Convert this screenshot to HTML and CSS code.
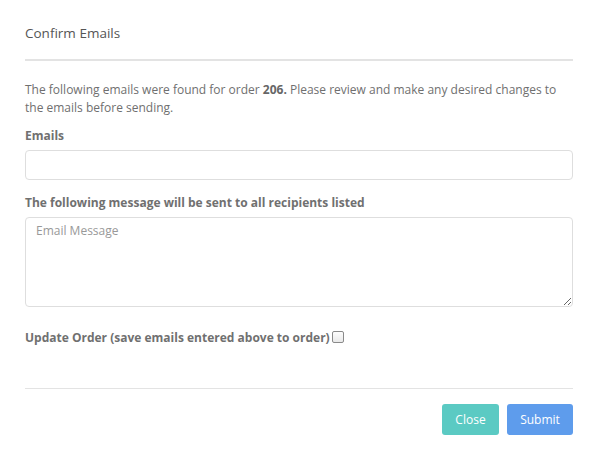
FILE: index.html
```html
<!DOCTYPE html>
<html>
<head>
<meta charset="utf-8">
<link rel="stylesheet" href="styles.css">
</head>
<body>
<div class="modal">
  <div class="modal-header">
    <h4 class="title">Confirm Emails</h4>
  </div>
  <div class="modal-body">
    <p class="intro">The following emails were found for order <b>206.</b> Please review and make any desired changes to the emails before sending.</p>
    <label class="label">Emails</label>
    <input class="field" type="text">
    <label class="label label-msg">The following message will be sent to all recipients listed</label>
    <textarea class="field area" placeholder="Email Message"></textarea>
    <div class="check-row">
      <label class="label inline">Update Order (save emails entered above to order)</label><span class="checkbox"></span>
    </div>
  </div>
  <div class="modal-footer">
    <button class="btn btn-close">Close</button>
    <button class="btn btn-submit">Submit</button>
  </div>
</div>
</body>
</html>
```
FILE: styles.css
```css
html, body {
  margin: 0;
  padding: 0;
  background: #fff;
}
body {
  font-family: "Open Sans", "Noto Sans", sans-serif;
  color: #6f6f6f;
  font-size: 12px;
}
.modal {
  padding: 0 23px 0 25px;
}
.modal-header {
  padding-top: 24px;
  padding-bottom: 16px;
  border-bottom: 2px solid #e3e3e3;
}
.title {
  margin: 0;
  font-size: 13.5px;
  font-weight: 400;
  line-height: 19px;
  color: #555;
}
.modal-body {
  padding-top: 20px;
}
.intro {
  margin: 0 0 10px;
  line-height: 18px;
}
.intro b {
  font-weight: 700;
  color: #666;
}
.label {
  display: block;
  font-weight: 700;
  line-height: 18px;
  color: #707070;
}
.field {
  display: block;
  box-sizing: border-box;
  width: 100%;
  height: 30px;
  margin: 5px 0 14px;
  border: 1px solid #dedede;
  border-radius: 4px;
  background: #fff;
  font-family: inherit;
  font-size: 12px;
  color: #555;
  padding: 5px 10px;
  outline: none;
}
.area {
  height: 90px;
  resize: vertical;
  margin-bottom: 22px;
  line-height: 18px;
  padding: 4px 10px;
}
.area::placeholder {
  color: #999;
}
.check-row {
  display: flex;
  align-items: center;
  height: 18px;
}
.label.inline {
  display: inline-block;
}
.checkbox {
  display: inline-block;
  width: 10px;
  height: 10px;
  margin-left: 2px;
  margin-top: -2px;
  border: 1px solid #8a8a8a;
  border-radius: 2px;
  background: linear-gradient(#fdfdfd, #e9e9e9);
}
.modal-footer {
  margin-top: 41px;
  border-top: 1px solid #e3e3e3;
  padding-top: 15px;
  display: flex;
  justify-content: flex-end;
  gap: 8px;
}
.btn {
  height: 31px;
  border: none;
  border-radius: 3px;
  color: #fff;
  font-family: inherit;
  font-size: 12px;
  padding: 0 12px;
  cursor: pointer;
}
.btn-close {
  background: #5bcac3;
  width: 57px;
}
.btn-submit {
  background: #5e9cec;
  width: 66px;
}
```
